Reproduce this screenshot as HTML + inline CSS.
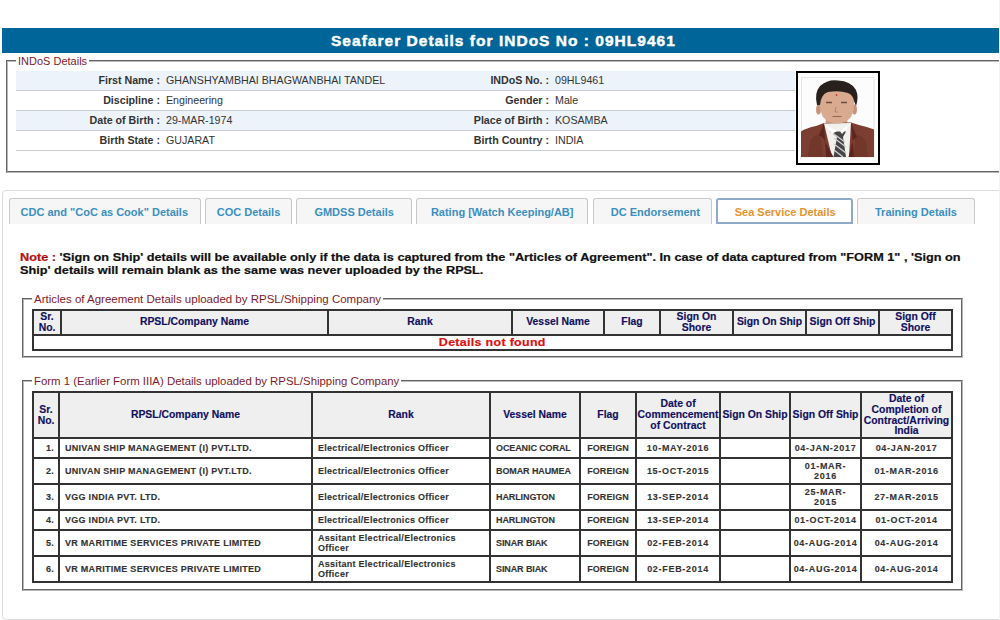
<!DOCTYPE html>
<html><head><meta charset="utf-8">
<style>
*{margin:0;padding:0;box-sizing:border-box}
html,body{width:1000px;height:620px;overflow:hidden;background:#fff;font-family:"Liberation Sans",sans-serif}
.abs{position:absolute}
#hdr{left:2px;top:28px;width:997px;height:25px;background:#006699}
#ttl{left:331px;top:32px;color:#fff;font-weight:bold;font-size:15.5px;letter-spacing:1.02px;-webkit-text-stroke:0.45px #fff;white-space:nowrap;line-height:18px}
.fs{position:absolute;border:2px groove #b8b8b8}
.lg{position:absolute;background:#fff;color:#801a2a;white-space:nowrap;padding:0 2px}
.row{position:absolute;left:16px;width:779px;height:20px;border-bottom:1px solid #c9cdd2}
.row.b{background:#ecf3fb}
.lb{position:absolute;font-weight:bold;font-size:10.67px;line-height:12px;color:#333;white-space:nowrap;text-align:right}
.vl{position:absolute;font-size:10.67px;line-height:12px;color:#333;white-space:nowrap}
#tabs{left:2px;top:190px;width:1010px;height:430px;border:1px solid #dcdcdc;border-radius:4px}
#edge{left:999px;top:0;width:1px;height:620px;background:#f3f3f3}
.tab{position:absolute;top:198px;height:26px;border:1px solid #c8c8c8;border-bottom:none;border-radius:3px 3px 0 0;background:#f6f6f6;color:#3a90c2;font-weight:bold;font-size:11px;white-space:nowrap}
.tab span{position:absolute;top:7px}
.tab.act{background:#fff;border:2px solid #8eaac8;border-bottom:2px solid #8eaac8;color:#e6922e}
.tab.act span{top:6px}
#note{left:20px;top:251px;width:960px;font-weight:bold;font-size:11px;line-height:13px;color:#111;white-space:nowrap;transform:scaleX(1.155);transform-origin:0 0;-webkit-text-stroke:0.2px #111}
table{position:absolute;border-collapse:collapse;table-layout:fixed}
td,th{border:2px solid #333;padding:0;overflow:hidden}
th{background:#efefef;color:#101060;font-weight:bold;font-size:10.4px;line-height:10.75px;text-align:center;padding-top:1px;-webkit-text-stroke:0.15px #101060}
td{color:#333;font-weight:bold;font-size:9px;letter-spacing:0.28px;line-height:10px;white-space:nowrap;-webkit-text-stroke:0.12px #333}
td.c{text-align:center}
td.r{text-align:right;padding-right:4px}
td.l{text-align:left;padding-left:5px}
td.vs{letter-spacing:-0.1px}
td.fg{letter-spacing:0.1px}
td.dt{letter-spacing:0.7px}
td.nf{color:#e01010;font-size:11px}
.nf span{display:inline-block;transform:scaleX(1.13);-webkit-text-stroke:0.2px #e01010}
</style></head><body>
<div id="hdr" class="abs"></div>
<div id="ttl" class="abs">Seafarer Details for INDoS No : 09HL9461</div>

<!-- INDoS fieldset -->
<div class="fs" style="left:6px;top:60px;width:1010px;height:113px"></div>
<div class="lg" style="left:16px;top:55px;font-size:11px;line-height:13px">INDoS Details</div>

<div class="row b" style="top:71px"></div>
<div class="row" style="top:91px"></div>
<div class="row b" style="top:111px"></div>
<div class="row" style="top:131px"></div>
<div class="lb" style="left:0;width:160px;top:74px">First Name :</div>
<div class="vl" style="left:166px;top:74px">GHANSHYAMBHAI BHAGWANBHAI TANDEL</div>
<div class="lb" style="left:400px;width:149px;top:74px">INDoS No. :</div>
<div class="vl" style="left:555px;top:74px">09HL9461</div>
<div class="lb" style="left:0;width:160px;top:94px">Discipline :</div>
<div class="vl" style="left:166px;top:94px">Engineering</div>
<div class="lb" style="left:400px;width:149px;top:94px">Gender :</div>
<div class="vl" style="left:555px;top:94px">Male</div>
<div class="lb" style="left:0;width:160px;top:114px">Date of Birth :</div>
<div class="vl" style="left:166px;top:114px">29-MAR-1974</div>
<div class="lb" style="left:400px;width:149px;top:114px">Place of Birth :</div>
<div class="vl" style="left:555px;top:114px">KOSAMBA</div>
<div class="lb" style="left:0;width:160px;top:134px">Birth State :</div>
<div class="vl" style="left:166px;top:134px">GUJARAT</div>
<div class="lb" style="left:400px;width:149px;top:134px">Birth Country :</div>
<div class="vl" style="left:555px;top:134px">INDIA</div>

<svg class="abs" style="left:796px;top:71px" width="84" height="94" viewBox="0 0 84 94">
<rect x="1" y="1" width="82" height="92" fill="#fff" stroke="#000" stroke-width="2"/>
<rect x="5.5" y="6.5" width="72.5" height="79.5" fill="#fcfcfc" stroke="#e4e4e4" stroke-width="1"/>
<path d="M30,46 L51,46 L52,58 L29,58 Z" fill="#cf9d86"/>
<path d="M5,60.5 Q10,57 20,55 L28,52 L55,51.5 L63,54 Q72,56 78,58.5 L78,86 L5,86 Z" fill="#7c3e31"/>
<path d="M14,70 Q18,64 24,63 L27,86 L12,86 Z M70,70 Q66,64 60,64 L57,86 L72,86 Z" fill="#6c3429" opacity="0.7"/>
<path d="M28,52.5 L55,52 L53,86 L36,86 Z" fill="#f3f1ee"/>
<path d="M28,52.5 L23,64 L27,67 L37.5,86 L30,86 Z" fill="#5a261f"/>
<path d="M55,52 L61,66 L57,69 L52.5,86 L58,86 Z" fill="#5a261f"/>
<path d="M33.5,60.5 L50,60.5 L47,66 L50,86 L37.5,86 L41,66 Z" fill="#454545"/>
<path d="M35,61 L49,71 M38,67 L50,76 M38,73 L50,82 M38,79 L47,86" stroke="#cfcfcf" stroke-width="1.4"/>
<path d="M28,52.5 L36,63 L41,60 Z M55,52 L46,63 L44,60 Z" fill="#fff"/>
<ellipse cx="22.5" cy="38.5" rx="2.4" ry="5" fill="#c89277"/>
<ellipse cx="58.5" cy="38.5" rx="2.4" ry="5" fill="#c89277"/>
<path d="M24,31 Q24,19 41,18 Q58,19 58,31 Q58,41 55,46 Q50,52 41,52.5 Q32,52 27,46 Q24,41 24,31 Z" fill="#d9aa90"/>
<path d="M21,34 Q18,22 24,15 Q32,8 42,9.5 Q55,10 60,19 Q63,26 60,35 L58,30 Q57,24 52,22 Q43,19 32,21 Q25,23 24,34 Z" fill="#27201c"/>
<path d="M30,31.5 L36,31.5 M45,31.5 L51,31.5" stroke="#6f4a3c" stroke-width="1.4"/>
<path d="M40,36 L39,41 L42,41" stroke="#b47d66" stroke-width="0.9" fill="none"/>
<path d="M36.5,45.5 L45.5,45.5" stroke="#9a6555" stroke-width="1.1"/>
<circle cx="40.5" cy="24" r="0.9" fill="#c04030"/>
</svg>
<!-- LOWER -->
<div id="tabs" class="abs"></div>
<div class="tab" style="left:9px;width:192px"><span style="left:10.5px">CDC and &quot;CoC as Cook&quot; Details</span></div>
<div class="tab" style="left:205px;width:87px"><span style="left:10.7px">COC Details</span></div>
<div class="tab" style="left:296px;width:116px"><span style="left:17.4px">GMDSS Details</span></div>
<div class="tab" style="left:416px;width:172px"><span style="left:13.9px">Rating [Watch Keeping/AB]</span></div>
<div class="tab" style="left:593px;width:119px"><span style="left:16.7px">DC Endorsement</span></div>
<div class="tab act" style="left:716px;width:137px"><span style="left:16.7px">Sea Service Details</span></div>
<div class="tab" style="left:857px;width:118px"><span style="left:17.0px">Training Details</span></div>
<div id="note" class="abs"><span style="color:#e00c0c">Note :</span> 'Sign on Ship' details will be available only if the data is captured from the "Articles of Agreement". In case of data captured from "FORM 1" , 'Sign on<br>Ship' details will remain blank as the same was never uploaded by the RPSL.</div>
<div class="fs" style="left:22px;top:298px;width:941px;height:60px"></div>
<div class="lg" style="left:32px;top:293px;font-size:11.5px;line-height:13px">Articles of Agreement Details uploaded by RPSL/Shipping Company</div>
<table style="left:32px;top:309px;width:921px">
<colgroup><col style="width:28px"><col style="width:267px"><col style="width:184px"><col style="width:92px"><col style="width:56px"><col style="width:73px"><col style="width:73px"><col style="width:73px"><col style="width:73px"></colgroup>
<tr style="height:24px"><th>Sr.<br>No.</th><th>RPSL/Company Name</th><th>Rank</th><th>Vessel Name</th><th>Flag</th><th>Sign On<br>Shore</th><th>Sign On Ship</th><th>Sign Off Ship</th><th>Sign Off<br>Shore</th></tr>
<tr style="height:15px"><td colspan="9" class="c nf"><span>Details not found</span></td></tr>
</table>
<div class="fs" style="left:22px;top:380px;width:941px;height:211px"></div>
<div class="lg" style="left:32px;top:375px;font-size:11.4px;line-height:13px">Form 1 (Earlier Form IIIA) Details uploaded by RPSL/Shipping Company</div>
<table style="left:32px;top:391px;width:921px">
<colgroup><col style="width:26px"><col style="width:253px"><col style="width:178px"><col style="width:90px"><col style="width:56px"><col style="width:84px"><col style="width:70px"><col style="width:71px"><col style="width:91px"></colgroup>
<tr style="height:46px"><th>Sr.<br>No.</th><th>RPSL/Company Name</th><th>Rank</th><th>Vessel Name</th><th>Flag</th><th>Date of<br>Commencement<br>of Contract</th><th>Sign On Ship</th><th>Sign Off Ship</th><th>Date of<br>Completion of<br>Contract/Arriving<br>India</th></tr>
<tr style="height:20px"><td class="r">1.</td><td class="l">UNIVAN SHIP MANAGEMENT (I) PVT.LTD.</td><td class="l rk">Electrical/Electronics Officer</td><td class="l vs">OCEANIC CORAL</td><td class="c fg">FOREIGN</td><td class="c dt">10-MAY-2016</td><td class="c"></td><td class="c dt">04-JAN-2017</td><td class="c dt">04-JAN-2017</td></tr>
<tr style="height:26px"><td class="r">2.</td><td class="l">UNIVAN SHIP MANAGEMENT (I) PVT.LTD.</td><td class="l rk">Electrical/Electronics Officer</td><td class="l vs">BOMAR HAUMEA</td><td class="c fg">FOREIGN</td><td class="c dt">15-OCT-2015</td><td class="c"></td><td class="c dt">01-MAR-<br>2016</td><td class="c dt">01-MAR-2016</td></tr>
<tr style="height:26px"><td class="r">3.</td><td class="l">VGG INDIA PVT. LTD.</td><td class="l rk">Electrical/Electronics Officer</td><td class="l vs">HARLINGTON</td><td class="c fg">FOREIGN</td><td class="c dt">13-SEP-2014</td><td class="c"></td><td class="c dt">25-MAR-<br>2015</td><td class="c dt">27-MAR-2015</td></tr>
<tr style="height:20px"><td class="r">4.</td><td class="l">VGG INDIA PVT. LTD.</td><td class="l rk">Electrical/Electronics Officer</td><td class="l vs">HARLINGTON</td><td class="c fg">FOREIGN</td><td class="c dt">13-SEP-2014</td><td class="c"></td><td class="c dt">01-OCT-2014</td><td class="c dt">01-OCT-2014</td></tr>
<tr style="height:26px"><td class="r">5.</td><td class="l">VR MARITIME SERVICES PRIVATE LIMITED</td><td class="l rk">Assitant Electrical/Electronics<br>Officer</td><td class="l vs">SINAR BIAK</td><td class="c fg">FOREIGN</td><td class="c dt">02-FEB-2014</td><td class="c"></td><td class="c dt">04-AUG-2014</td><td class="c dt">04-AUG-2014</td></tr>
<tr style="height:26px"><td class="r">6.</td><td class="l">VR MARITIME SERVICES PRIVATE LIMITED</td><td class="l rk">Assitant Electrical/Electronics<br>Officer</td><td class="l vs">SINAR BIAK</td><td class="c fg">FOREIGN</td><td class="c dt">02-FEB-2014</td><td class="c"></td><td class="c dt">04-AUG-2014</td><td class="c dt">04-AUG-2014</td></tr>
</table>
<div id="edge" class="abs"></div>
</body></html>
